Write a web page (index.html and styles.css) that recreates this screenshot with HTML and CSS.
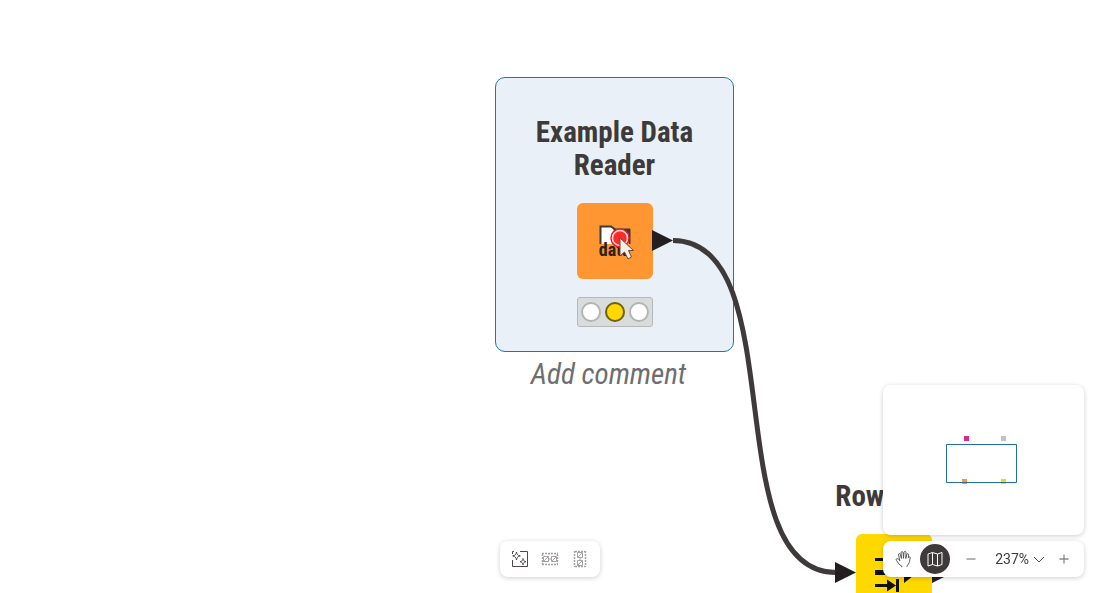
FILE: index.html
```html
<!DOCTYPE html>
<html lang="en">
<head>
<meta charset="utf-8">
<meta name="viewport" content="width=device-width, initial-scale=1">
<title>Workflow editor</title>
<link rel="stylesheet" href="styles.css">
</head>
<body>
<main class="canvas">
  <section class="node reader selected">
    <h2 class="node-title">Example Data Reader</h2>
    <div class="tile orange">
      <svg class="glyph" viewBox="0 0 76 76" aria-hidden="true">
        <path d="M23.500 41V23.500H34l5 3.500h13.500v14" fill="#fff" stroke="#3e3a39" stroke-width="2"/>
        <path d="M36 25.500h17v5H38z" fill="#3e3a39"/>
      </svg>
      <span class="tile-label">data</span>
    </div>
    <div class="status" role="img" aria-label="Configured">
      <span class="light"></span><span class="light on"></span><span class="light"></span>
    </div>
  </section>
  <p class="comment">Add comment</p>

  <section class="node filter">
    <h2 class="node-title">Row Filter</h2>
    <div class="tile yellow">
      <svg class="glyph" viewBox="0 0 76 76" aria-hidden="true" fill="none" stroke="#111">
        <path d="M19 25.500h36" stroke-width="3"/>
        <path d="M19 38.500h34" stroke-width="5"/>
        <path d="M19 51.500h14M41.500 45v13" stroke-width="3"/>
        <path d="M31 45.500l9 6-9 6zM48 42h9l-9 7z" fill="#111" stroke="none"/>
      </svg>
    </div>
  </section>

  <svg class="wires" width="1100" height="593" viewBox="0 0 1100 593" aria-hidden="true">
    <path d="M673 240.500C794 240.500 715 572.500 836 572.500" fill="none" stroke="#3e3a39" stroke-width="5"/>
    <path d="M652 230l21 10.500-21 10.500zM835 562l21 10.500-21 10.500zM932 562l21 10.500-21 10.500z" fill="#231f20"/>
  </svg>

  <svg class="pointer" width="30" height="34" viewBox="0 0 30 34" aria-hidden="true">
    <circle cx="11" cy="11" r="9" fill="none" stroke="#f01818" stroke-width="1.500"/>
    <circle cx="11" cy="11" r="7.500" fill="#ff2a2e" stroke="#ffd8d0" stroke-width="1.500"/>
    <path d="M11 11v18l4.500-4 3.500 7 3.500-2-3-6.500h5z" fill="#f6eee4" stroke="#6b4a35" stroke-width="1"/>
  </svg>
</main>

<nav class="bar layout-bar" aria-label="Arrange">
  <button class="tool" aria-label="Auto layout">
    <svg viewBox="0 0 20 20" fill="none" stroke="#4d4948">
      <path d="M10 2.500h7.500v15h-15V11M2.500 5V2.500H4M6.500 3c.4 2.500 1 3.400 3.800 3.900C7.500 7.500 7 8.500 6.500 11 6 8.500 5.300 7.500 2.700 6.900 5.300 6.400 6 5.500 6.500 3zM13 9.500c.3 2 .9 2.800 3 3.200-2.100.4-2.700 1.200-3 3.200-.3-2-.9-2.800-3-3.200 2.100-.4 2.700-1.200 3-3.200z"/>
    </svg>
  </button>
  <button class="tool" aria-label="Align horizontally" disabled>
    <svg viewBox="0 0 20 20" fill="none" stroke="#a5a2a1">
      <path d="M2 4.500h16M2 15.500h16" stroke-width="1.500" stroke-dasharray="2 1"/>
      <path d="M2.500 5v10M17.500 5v10" stroke-width="1.500" stroke-dasharray="2 1"/>
      <path d="M3.500 7.500h5v5h-5zM11.500 7.500h5v5h-5zM4 12l4-4M12 12l4-4M8.500 10h3"/>
    </svg>
  </button>
  <button class="tool" aria-label="Align vertically" disabled>
    <svg viewBox="0 0 20 20" fill="none" stroke="#a5a2a1">
      <path d="M4.500 2v16M15.500 2v16" stroke-width="1.500" stroke-dasharray="2 1"/>
      <path d="M5 2.500h10M5 17.500h10" stroke-width="1.500" stroke-dasharray="2 1"/>
      <path d="M7.500 3.500h5v5h-5zM7.500 11.500h5v5h-5zM12 4L8 8M12 12l-4 4M10 8.500v3"/>
    </svg>
  </button>
</nav>

<aside class="view-controls">
  <div class="minimap">
    <svg class="map" width="72" height="48" viewBox="0 0 72 48" role="img" aria-label="Workflow overview">
      <path d="M18 0h5v5h-5z" fill="#dc2b87"/>
      <path d="M55 0h5v5h-5z" fill="#c1c3c3"/>
      <path d="M16 43h5v5h-5z" fill="#fd9631"/>
      <path d="M55 43h5v5h-5z" fill="#fdd600"/>
      <path d="M.500 8.500h70v38H.500z" fill="none" stroke="#246ea6"/>
    </svg>
  </div>
  <div class="bar zoom-bar">
    <button class="tool" aria-label="Pan">
      <svg viewBox="0 0 20 20" fill="none" stroke="#4d4948" stroke-width=".9" stroke-linecap="round" stroke-linejoin="round">
        <path d="M6.700 11.500L5.500 5.700c-.2-1.300 1.400-1.700 1.800-.4L8.500 9.500 8.100 3.700c0-1.400 1.800-1.500 2-.1L10.500 9.300l.5-6c.2-1.300 2-1.200 2 .2L12.800 9.500l1.100-4.200c.4-1.200 1.900-.8 1.700.5l-.3 3c.5-1.500 2.200-1.200 1.900.2-.6 2.500-.7 4.500-1.700 6-1 1.300-1.500 1.500-1.600 2.500M6.700 11.500C6 10.500 5 9.500 3.700 9.700c-.9.300-.6 1.200 0 2 1.300 1.700 2.200 4.300 5 5.300v.8"/>
      </svg>
    </button>
    <button class="tool active" aria-label="Minimap" aria-pressed="true">
      <svg viewBox="0 0 20 20" fill="none" stroke="#fff" stroke-linejoin="round">
        <path d="M3 5l4.500-1.500 5 1.500L17 3.500v12L12.500 17l-5-1.500L3 17zM7.500 3.500v12M12.500 5v12"/>
      </svg>
    </button>
    <button class="tool out" aria-label="Zoom out">
      <svg viewBox="0 0 20 20" stroke="#8b8988"><path d="M5.500 10h9" stroke-width="1.300"/></svg>
    </button>
    <button class="zoom-value" aria-haspopup="menu">237%
      <svg width="12" height="12" viewBox="0 0 12 12" fill="none" stroke="#4d4948" aria-hidden="true"><path d="M1 4l5 5 5-5"/></svg>
    </button>
    <button class="tool" aria-label="Zoom in">
      <svg viewBox="0 0 20 20" stroke="#8b8988"><path d="M5.500 10h9M10 5.500v9" stroke-width="1.300"/></svg>
    </button>
  </div>
</aside>
</body>
</html>
```
FILE: styles.css
```css
* {
  box-sizing: border-box;
}

body {
  margin: 0;
  background: #fff;
  color: #3e3a39;
  font-family: "Roboto Condensed", Roboto, sans-serif;
}

.canvas {
  position: relative;
  height: 100vh;
  overflow: hidden;
}

.node {
  position: absolute;
  display: flex;
  flex-direction: column;
  align-items: center;
  width: 239px;
}

.reader {
  left: 495px;
  top: 77px;
  padding: 38px 24px 24px;
}

.filter {
  left: 774px;
  top: 480px;
}

.selected {
  background: #e9f0f7;
  border: 1px solid #1f74b3;
  border-radius: 10px;
}

.node-title {
  margin: 0;
  font-size: 29px;
  line-height: 33px;
  font-weight: 700;
  text-align: center;
}

.tile {
  position: relative;
  width: 76px;
  height: 76px;
  margin-top: 21px;
  border-radius: 6px;
}

.orange {
  background: #ff9632;
}

.yellow {
  background: #ffd800;
}

.glyph {
  display: block;
  width: 100%;
}

.tile-label {
  position: absolute;
  top: 37px;
  width: 100%;
  color: #2b2118;
  font-size: 18px;
  line-height: 20px;
  font-weight: 700;
  text-align: center;
}

.status {
  display: flex;
  gap: 4px;
  margin-top: 18px;
  padding: 4px 3px;
  background: #d8dcdd;
  border: 1px solid #b5b8b9;
  border-radius: 3px;
}

.light {
  width: 20px;
  height: 20px;
  background: #fff;
  border: 2px solid #b4b4b4;
  border-radius: 50%;
}

.on {
  background: #ffd800;
  border-color: #6f600b;
}

.comment {
  position: absolute;
  left: 495px;
  top: 358px;
  width: 227px;
  margin: 0;
  color: #6e6e6e;
  font-size: 29px;
  line-height: 33px;
  font-style: italic;
  text-align: center;
}

.wires {
  position: absolute;
  left: 0;
  top: 0;
}

.pointer {
  position: absolute;
  left: 609px;
  top: 227px;
}

.bar {
  display: flex;
  align-items: center;
  height: 36px;
  background: #fff;
  border-radius: 8px;
  box-shadow: 0 1px 5px rgb(0 0 0 / 20%);
}

.layout-bar {
  position: fixed;
  left: 50%;
  bottom: 16px;
  padding: 0 5px;
  transform: translateX(-50%);
}

.view-controls {
  position: fixed;
  right: 16px;
  bottom: 16px;
  display: flex;
  flex-direction: column;
  gap: 6px;
  width: 201px;
}

.minimap {
  display: grid;
  place-items: center;
  height: 150px;
  background: #fff;
  border-radius: 8px;
  box-shadow: 0 1px 5px rgb(0 0 0 / 20%);
}

.map {
  margin-right: 4px;
}

.zoom-bar {
  gap: 2px;
  padding: 0 5px;
}

button {
  padding: 0;
  background: none;
  border: 0;
  color: inherit;
  font: 14px/20px Roboto, sans-serif;
}

.tool {
  display: grid;
  place-items: center;
  width: 30px;
  height: 30px;
  border-radius: 50%;
}

.tool svg {
  width: 20px;
  height: 20px;
}

.active {
  background: #3e3a39;
}

.out {
  margin-left: 4px;
}

.zoom-value {
  display: flex;
  align-items: center;
  gap: 4px;
  margin: 0 2px 0 auto;
}
```
